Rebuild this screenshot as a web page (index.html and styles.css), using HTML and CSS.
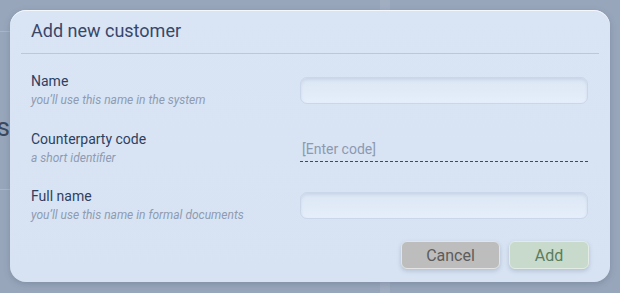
FILE: index.html
```html
<!DOCTYPE html>
<html lang="en">
<head>
  <meta charset="UTF-8">
  <meta name="viewport" content="width=device-width, initial-scale=1.0">
  <title>Customers</title>
  <link rel="stylesheet" href="styles.css">
</head>
<body>
  <div id="app">
    <div class="side">
      <div class="topbar"></div>
      <div class="pageTitle"><span>Customers</span></div>
      <div class="rowline"></div>
    </div>
  </div>

  <div id="modal">
    <div class="modalHead">Add new customer</div>
    <div class="modalBody">
      <div class="row">
        <div class="labelBox">
          <div class="label">Name</div>
          <div class="hint">you’ll use this name in the system</div>
        </div>
        <input class="field" type="text">
      </div>
      <div class="row">
        <div class="labelBox">
          <div class="label">Counterparty code</div>
          <div class="hint">a short identifier</div>
        </div>
        <input class="field codeField" type="text" placeholder="[Enter code]">
      </div>
      <div class="row">
        <div class="labelBox">
          <div class="label">Full name</div>
          <div class="hint">you’ll use this name in formal documents</div>
        </div>
        <input class="field" type="text">
      </div>
      <div class="btns">
        <button class="btn cancelBtn">Cancel</button>
        <button class="btn addBtn">Add</button>
      </div>
    </div>
  </div>
</body>
</html>
```

FILE: styles.css
```css
* { margin: 0; padding: 0; box-sizing: border-box; }
body {
  width: 100%;
  height: 100vh;
  font-family: Roboto, "Noto Sans", sans-serif;
  background: #98a6bb linear-gradient(90deg, transparent 380px, #a1aec2 380px, #a1aec2 390px, transparent 390px);
  overflow: hidden;
}
#app {
  height: 100vh;
  display: flex;
}
.side {
  width: 10px;
  display: flex;
  flex-direction: column;
}
.topbar {
  height: 32px;
  border-bottom: 1px solid #a9b5c8;
}
.pageTitle {
  display: flex;
  justify-content: flex-end;
  margin-top: 80px;
  font-size: 26px;
  line-height: 30px;
  color: #3b495f;
  white-space: nowrap;
}
.rowline {
  margin-top: 47px;
  border-bottom: 1px solid #a9b6ca;
}

/* dialog */
#modal {
  position: absolute;
  left: 10px;
  top: 10px;
  width: 600px;
  height: 272px;
  border-radius: 16px;
  background: linear-gradient(180deg, #d9e5f5, #d7e3f3);
  box-shadow: inset 0 1px 0 rgba(255,255,255,0.7), 0 2px 6px rgba(60,75,100,0.25);
  padding: 0 11px;
}
.modalHead {
  padding: 10px 10px 11px;
  font-size: 18px;
  line-height: 22px;
  color: #37476a;
  border-bottom: 1px solid #a8cdef;
}
.modalBody {
  padding: 18px 11px 0 10px;
  display: flex;
  flex-direction: column;
  gap: 21.5px;
}
.row {
  display: flex;
  align-items: center;
  justify-content: space-between;
  height: 36px;
}
.label {
  font-size: 14px;
  line-height: 18px;
  color: #2f3f60;
}
.hint {
  margin-top: 2px;
  font-size: 12px;
  line-height: 16px;
  font-style: italic;
  color: #8e9bb2;
}
.field {
  width: 288px;
  height: 27px;
  border: 1px solid #cad7ea;
  border-radius: 7px;
  background: linear-gradient(180deg, #dce7f5, #e5eefa);
  box-shadow: inset 0 2px 3px rgba(120,140,170,0.18);
  outline: none;
  font-family: inherit;
  font-size: 14px;
  padding: 0 2px;
  color: #2f3f60;
}
.codeField {
  background: transparent;
  border: none;
  border-bottom: 1px dashed #3b4b6b;
  border-radius: 0;
  box-shadow: none;
  padding-top: 2px;
  margin-top: 1px;
}
.codeField::placeholder {
  color: #8d99b0;
}
.btns {
  display: flex;
  justify-content: flex-end;
  gap: 9px;
  margin-top: -3.5px;
  margin-right: -1px;
}
.btn {
  height: 28px;
  border-radius: 6px;
  font-family: inherit;
  font-size: 16px;
  box-shadow: 0 2px 4px rgba(70,90,120,0.25);
}
.cancelBtn {
  width: 99px;
  background: #bdbdbd;
  border: 1px solid #e4e4e4;
  color: #5c5c5c;
}
.addBtn {
  width: 80px;
  background: #c8dacb;
  border: 1px solid #e2ece4;
  color: #5b7d5e;
}
```
